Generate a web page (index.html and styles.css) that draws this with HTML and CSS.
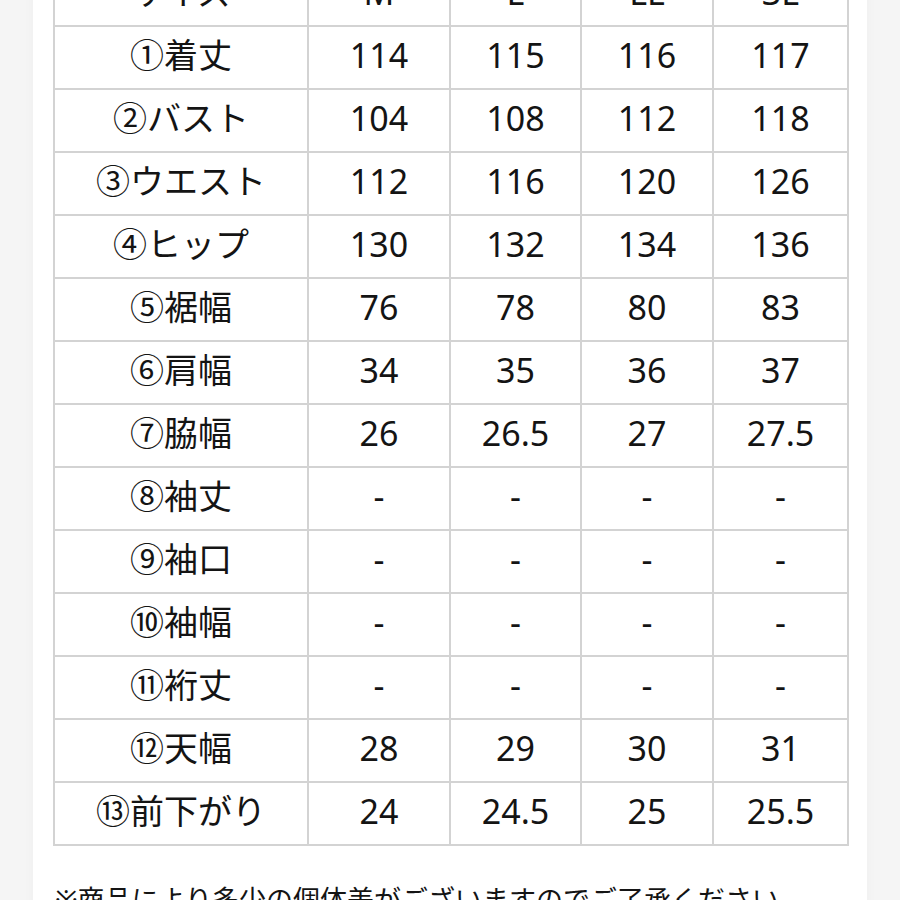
FILE: index.html
```html
<!DOCTYPE html>
<html lang="ja">
<head>
<meta charset="utf-8">
<title>サイズ表</title>
<link rel="stylesheet" href="styles.css">
</head>
<body>
<div class="panel">
  <table class="size-table">
    <colgroup>
      <col class="c-label"><col class="c1"><col class="c2"><col class="c3"><col class="c4">
    </colgroup>
    <tbody>
      <tr><td>サイズ</td><td>M</td><td>L</td><td>LL</td><td>3L</td></tr>
      <tr><td>①着丈</td><td>114</td><td>115</td><td>116</td><td>117</td></tr>
      <tr><td>②バスト</td><td>104</td><td>108</td><td>112</td><td>118</td></tr>
      <tr><td>③ウエスト</td><td>112</td><td>116</td><td>120</td><td>126</td></tr>
      <tr><td>④ヒップ</td><td>130</td><td>132</td><td>134</td><td>136</td></tr>
      <tr><td>⑤裾幅</td><td>76</td><td>78</td><td>80</td><td>83</td></tr>
      <tr><td>⑥肩幅</td><td>34</td><td>35</td><td>36</td><td>37</td></tr>
      <tr><td>⑦脇幅</td><td>26</td><td>26.5</td><td>27</td><td>27.5</td></tr>
      <tr><td>⑧袖丈</td><td>-</td><td>-</td><td>-</td><td>-</td></tr>
      <tr><td>⑨袖口</td><td>-</td><td>-</td><td>-</td><td>-</td></tr>
      <tr><td>⑩袖幅</td><td>-</td><td>-</td><td>-</td><td>-</td></tr>
      <tr><td>⑪裄丈</td><td>-</td><td>-</td><td>-</td><td>-</td></tr>
      <tr><td>⑫天幅</td><td>28</td><td>29</td><td>30</td><td>31</td></tr>
      <tr><td>⑬前下がり</td><td>24</td><td>24.5</td><td>25</td><td>25.5</td></tr>
    </tbody>
  </table>
  <p class="note">※商品により多少の個体差がございますのでご了承ください。</p>
</div>
</body>
</html>
```

FILE: styles.css
```css
html, body {
  margin: 0;
  padding: 0;
  background: #f5f5f5;
}
body {
  font-family: "Noto Sans", "Noto Sans CJK JP", sans-serif;
  font-weight: 400;
  color: #141414;
  overflow: hidden;
  height: 900px;
}
.panel {
  background: #ffffff;
  margin: -38px 33px 0 33px;
  padding: 0 20px 40px 20px;
  box-shadow: 0 0 12px rgba(0, 0, 0, 0.03);
}
.size-table {
  width: 794px;
  table-layout: fixed;
  border-collapse: collapse;
  font-size: 34px;
}
.c-label { width: 254px; }
.c1 { width: 142px; }
.c2 { width: 131px; }
.c3 { width: 132px; }
.c4 { width: 135px; }
.size-table tr { height: 63px; }
.size-table td {
  border: 2px solid #d3d3d3;
  padding: 0 0 5px 0;
  text-align: center;
  vertical-align: middle;
  line-height: 1;
  white-space: nowrap;
}
.note {
  margin: 34px 0 0 2px;
  font-size: 27px;
  line-height: 1.5;
  white-space: nowrap;
}
```
